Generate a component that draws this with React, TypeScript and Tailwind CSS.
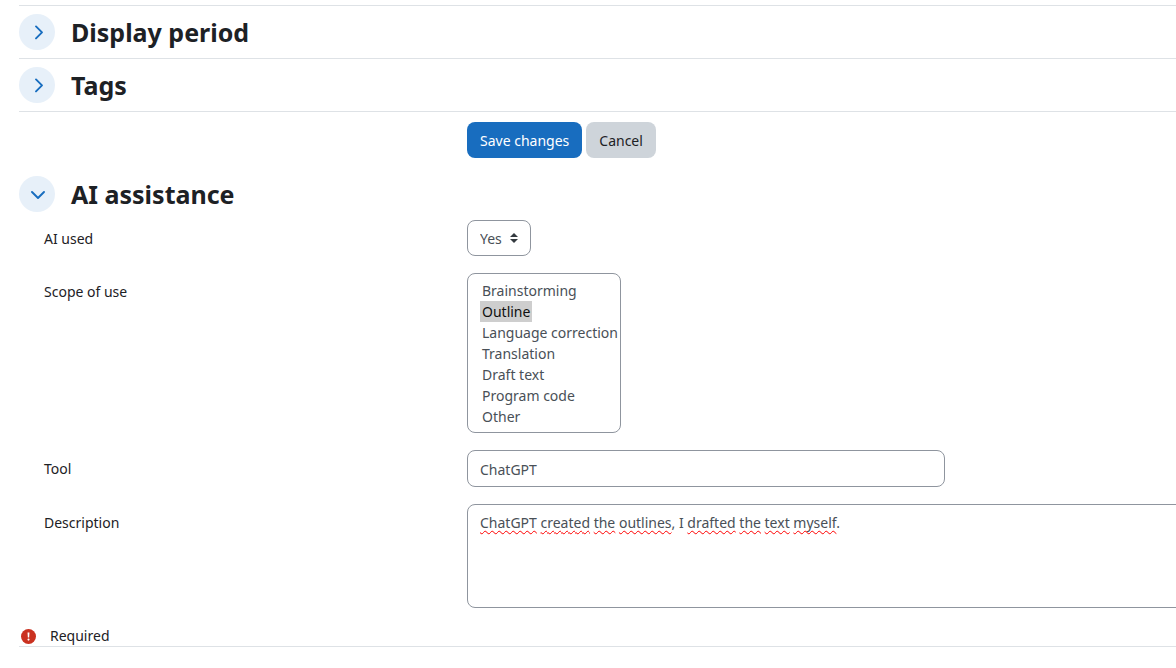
import React, { useState } from "react"
import clsx from "clsx"

const SCOPES = [
  "Brainstorming",
  "Outline",
  "Language correction",
  "Translation",
  "Draft text",
  "Program code",
  "Other",
]

// words the spell checker flags are marked true
const DESCRIPTION: [string, boolean][] = [
  ["ChatGPT", true],
  [" ", false],
  ["created", true],
  [" ", false],
  ["the", true],
  [" ", false],
  ["outlines", true],
  [", I ", false],
  ["drafted", true],
  [" ", false],
  ["the", true],
  [" ", false],
  ["text", true],
  [" ", false],
  ["myself", true],
  [".", false],
]

const fieldClass = "rounded-lg border border-[#8f959e] bg-white px-3 text-[#495057] outline-none"

function SectionHeader({ title, open, onToggle }: { title: string; open: boolean; onToggle: () => void }) {
  return (
    <div className="flex items-center gap-4">
      <button
        type="button"
        aria-expanded={open}
        aria-label={title}
        onClick={onToggle}
        className="flex size-9 shrink-0 items-center justify-center rounded-full bg-[#e7f0f9] text-[#186dbf]"
      >
        <svg
          viewBox="0 0 16 16"
          className="size-4"
          fill="none"
          stroke="currentColor"
          strokeWidth="1.9"
          strokeLinecap="round"
          strokeLinejoin="round"
        >
          <path d={open ? "M3 6l6 6 6-6" : "M7 2.4l6 6-6 6"} />
        </svg>
      </button>
      <h3 className="text-[25px] leading-8 font-bold">{title}</h3>
    </div>
  )
}

function FormRow({ id, label, children }: { id: string; label: string; children: React.ReactNode }) {
  return (
    <div className="grid grid-cols-[448px_minmax(0,1fr)] items-start">
      <label htmlFor={id} className="pt-[9px] pl-[25px]">
        {label}
      </label>
      <div>{children}</div>
    </div>
  )
}

export default function App() {
  const [periodOpen, setPeriodOpen] = useState(false)
  const [tagsOpen, setTagsOpen] = useState(false)
  const [aiOpen, setAiOpen] = useState(true)
  const [description, setDescription] = useState(DESCRIPTION.map(([part]) => part).join(""))
  const [edited, setEdited] = useState(false)

  return (
    <form
      className="min-h-screen overflow-x-hidden bg-white pt-[5px] pl-[19px] font-['Noto_Sans',sans-serif] text-sm text-[#1d2125]"
      onSubmit={(e) => e.preventDefault()}
    >
      <section className="border-t border-[#dee2e6] py-2">
        <SectionHeader title="Display period" open={periodOpen} onToggle={() => setPeriodOpen(!periodOpen)} />
      </section>
      <section className="border-y border-[#dee2e6] py-2">
        <SectionHeader title="Tags" open={tagsOpen} onToggle={() => setTagsOpen(!tagsOpen)} />
      </section>

      <div className="flex gap-1 pt-[10px] pb-[18px] pl-[448px]">
        <button type="submit" className="h-9 rounded-lg bg-[#186dbf] px-[13px] pt-[2px] text-white">
          Save changes
        </button>
        <button type="button" className="h-9 rounded-lg bg-[#ced4da] px-[13px] pt-[2px]">
          Cancel
        </button>
      </div>

      <section>
        <SectionHeader title="AI assistance" open={aiOpen} onToggle={() => setAiOpen(!aiOpen)} />
        {aiOpen && (
          <div className="flex flex-col gap-[17px] pt-2">
            <FormRow id="ai-used" label="AI used">
              <div className="relative w-16">
                <select
                  id="ai-used"
                  defaultValue="Yes"
                  className={clsx(fieldClass, "block h-9 w-full appearance-none pt-[2px]")}
                >
                  <option>Yes</option>
                  <option>No</option>
                </select>
                <svg
                  viewBox="0 0 8 10"
                  className="pointer-events-none absolute top-[13px] right-[13px] h-[10px] w-2"
                  fill="#343a40"
                >
                  <path d="M4 0l4 4H0zM4 10L0 6h8z" />
                </svg>
              </div>
            </FormRow>

            <FormRow id="scope" label="Scope of use">
              <select
                id="scope"
                multiple
                size={7}
                defaultValue={["Outline"]}
                className={clsx(fieldClass, "block h-[160px] w-[154px] appearance-none overflow-hidden py-[6px] pr-0")}
              >
                {SCOPES.map((scope) => (
                  <option key={scope} className="h-[21px] w-fit px-[2px] pt-px pb-0 leading-5">
                    {scope}
                  </option>
                ))}
              </select>
            </FormRow>

            <FormRow id="tool" label="Tool">
              <input
                id="tool"
                type="text"
                defaultValue="ChatGPT"
                className={clsx(fieldClass, "block h-[37px] w-full max-w-[478px] pt-[2px]")}
              />
            </FormRow>

            <FormRow id="description" label="Description">
              <div className="relative -mr-3">
                <textarea
                  id="description"
                  spellCheck={false}
                  value={description}
                  onChange={(e) => {
                    setDescription(e.target.value)
                    setEdited(true)
                  }}
                  className={clsx(fieldClass, "block h-[104px] w-full resize-none py-2 leading-5")}
                />
                {/* spelling marks under the flagged words */}
                {!edited && (
                  <div
                    aria-hidden="true"
                    className="pointer-events-none absolute inset-0 px-[13px] py-[9px] leading-5 whitespace-pre-wrap text-transparent"
                  >
                    {DESCRIPTION.map(([part, flagged], i) => (
                      <span
                        key={i}
                        className={clsx(
                          flagged &&
                            "underline decoration-[#ff0000] decoration-wavy decoration-1 underline-offset-2 [text-decoration-skip-ink:none]"
                        )}
                      >
                        {part}
                      </span>
                    ))}
                  </div>
                )}
              </div>
            </FormRow>
          </div>
        )}
      </section>

      <div className="flex items-center gap-[14px] border-b border-[#dee2e6] pt-[18px] pl-[2px]">
        <svg viewBox="0 0 16 16" className="size-[15px]" role="img" aria-label="Required field">
          <circle cx="8" cy="8" r="8" fill="#ca3120" />
          <path d="M7 3.8h2L8.7 9H7.3z" fill="#fff" />
          <circle cx="8" cy="11.3" r="1.1" fill="#fff" />
        </svg>
        <span>Required</span>
      </div>
    </form>
  )
}
